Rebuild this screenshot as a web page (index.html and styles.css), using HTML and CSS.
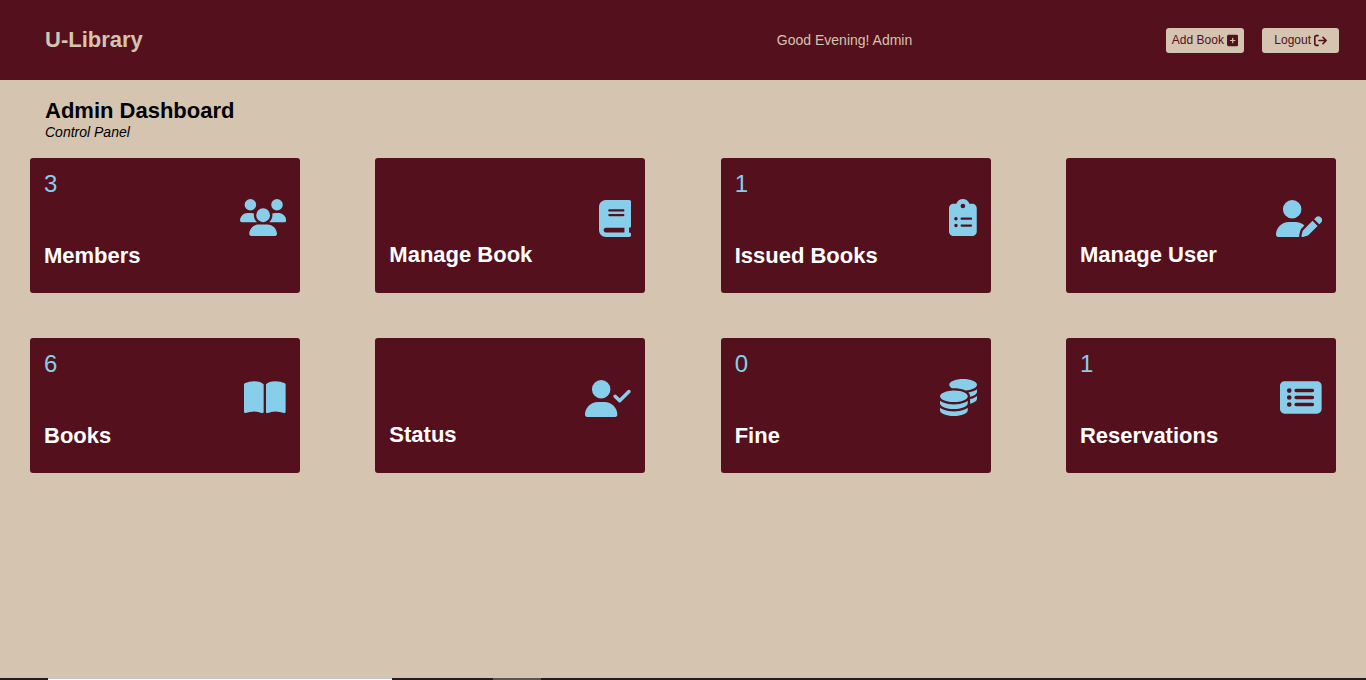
FILE: index.html
```html
<!DOCTYPE html>
<html lang="en">
<head>
<meta charset="utf-8">
<meta name="viewport" content="width=device-width, initial-scale=1">
<title>U-Library</title>
<link rel="stylesheet" href="styles.css">
</head>
<body>
<header class="topbar">
  <div class="brand">U-Library</div>
  <p class="greeting">Good Evening! Admin</p>
  <div class="actions">
    <button class="btn" type="button">Add Book <svg class="btn-icon" viewBox="0 0 448 512" aria-hidden="true"><path d="M64 32C28.7 32 0 60.7 0 96V416c0 35.3 28.7 64 64 64H384c35.3 0 64-28.7 64-64V96c0-35.3-28.7-64-64-64H64zM200 344V280H136c-13.3 0-24-10.7-24-24s10.7-24 24-24h64V168c0-13.3 10.7-24 24-24s24 10.7 24 24v64h64c13.3 0 24 10.7 24 24s-10.7 24-24 24H248v64c0 13.3-10.7 24-24 24s-24-10.7-24-24z"/></svg></button>
    <button class="btn btn-wide" type="button">Logout <svg class="btn-icon" viewBox="0 0 512 512" aria-hidden="true"><path d="M502.6 278.6c12.5-12.5 12.5-32.8 0-45.3l-128-128c-12.5-12.5-32.8-12.5-45.3 0s-12.5 32.8 0 45.3L402.7 224 192 224c-17.7 0-32 14.3-32 32s14.3 32 32 32l210.7 0-73.4 73.4c-12.5 12.5-12.5 32.8 0 45.3s32.8 12.5 45.3 0l128-128zM160 96c17.7 0 32-14.3 32-32s-14.3-32-32-32L96 32C43 32 0 75 0 128L0 384c0 53 43 96 96 96l64 0c17.7 0 32-14.3 32-32s-14.3-32-32-32l-64 0c-17.7 0-32-14.3-32-32l0-256c0-17.7 14.3-32 32-32l64 0z"/></svg></button>
  </div>
</header>
<main class="main">
  <div class="heading">
    <h1 class="title">Admin Dashboard</h1>
    <p class="subtitle">Control Panel</p>
  </div>
  <section class="cards">
    <article class="card">
      <p class="count">3</p>
      <svg class="icon" viewBox="0 0 640 512" aria-hidden="true"><path d="M144 0a80 80 0 1 1 0 160A80 80 0 1 1 144 0zM512 0a80 80 0 1 1 0 160A80 80 0 1 1 512 0zM0 298.7C0 239.8 47.8 192 106.7 192h42.7c15.9 0 31 3.5 44.6 9.7c-1.3 7.2-1.9 14.7-1.9 22.3c0 38.2 16.8 72.5 43.3 96c-.2 0-.4 0-.7 0H21.3C9.6 320 0 310.4 0 298.7zM405.3 320c-.2 0-.4 0-.7 0c26.6-23.5 43.3-57.8 43.3-96c0-7.6-.7-15-1.9-22.3c13.6-6.3 28.7-9.7 44.6-9.7h42.7C592.2 192 640 239.8 640 298.7c0 11.8-9.6 21.3-21.3 21.3H405.3zM224 224a96 96 0 1 1 192 0 96 96 0 1 1-192 0zM128 485.3C128 411.7 187.7 352 261.3 352H378.7C452.3 352 512 411.7 512 485.3c0 14.7-11.9 26.7-26.7 26.7H154.7c-14.7 0-26.7-11.9-26.7-26.7z"/></svg>
      <h2 class="label">Members</h2>
    </article>
    <article class="card card-plain">
      <svg class="icon" viewBox="0 0 448 512" aria-hidden="true"><path d="M96 0C43 0 0 43 0 96V416c0 53 43 96 96 96H384h32c17.7 0 32-14.3 32-32s-14.3-32-32-32V384c17.7 0 32-14.3 32-32V32c0-17.7-14.3-32-32-32H384 96zm0 384H352v64H96c-17.7 0-32-14.3-32-32s14.3-32 32-32zm32-240c0-8.8 7.2-16 16-16H336c8.8 0 16 7.2 16 16s-7.2 16-16 16H144c-8.8 0-16-7.2-16-16zm16 48H336c8.8 0 16 7.2 16 16s-7.2 16-16 16H144c-8.8 0-16-7.2-16-16s7.2-16 16-16z"/></svg>
      <h2 class="label">Manage Book</h2>
    </article>
    <article class="card">
      <p class="count">1</p>
      <svg class="icon" viewBox="0 0 384 512" aria-hidden="true"><path d="M192 0c-41.8 0-77.4 26.7-90.5 64H64C28.7 64 0 92.7 0 128V448c0 35.3 28.7 64 64 64H320c35.3 0 64-28.7 64-64V128c0-35.3-28.7-64-64-64H282.5C269.4 26.7 233.8 0 192 0zm0 64a32 32 0 1 1 0 64 32 32 0 1 1 0-64zM72 272a24 24 0 1 1 48 0 24 24 0 1 1-48 0zm104-16H304c8.8 0 16 7.2 16 16s-7.2 16-16 16H176c-8.8 0-16-7.2-16-16s7.2-16 16-16zM72 368a24 24 0 1 1 48 0 24 24 0 1 1-48 0zm88 0c0-8.8 7.2-16 16-16H304c8.8 0 16 7.2 16 16s-7.2 16-16 16H176c-8.8 0-16-7.2-16-16z"/></svg>
      <h2 class="label">Issued Books</h2>
    </article>
    <article class="card card-plain">
      <svg class="icon" viewBox="0 0 640 512" aria-hidden="true"><path d="M224 256A128 128 0 1 0 224 0a128 128 0 1 0 0 256zm-45.7 48C79.8 304 0 383.8 0 482.3C0 498.7 13.3 512 29.7 512H322.8c-3.1-8.8-3.7-18.4-1.4-27.8l15-60.1c2.8-11.3 8.6-21.5 16.8-29.7l40.3-40.3c-32.1-31-75.7-50.1-123.9-50.1H178.3zm435.5-68.3c-15.6-15.6-40.9-15.6-56.6 0l-29.4 29.4 71 71 29.4-29.4c15.6-15.6 15.6-40.9 0-56.6l-14.4-14.4zM375.9 417c-4.1 4.1-7 9.2-8.4 14.9l-15 60.1c-1.4 5.5 .2 11.2 4.2 15.2s9.7 5.6 15.2 4.2l60.1-15c5.6-1.4 10.8-4.3 14.9-8.4L576.1 358.7l-71-71L375.9 417z"/></svg>
      <h2 class="label">Manage User</h2>
    </article>
    <article class="card">
      <p class="count">6</p>
      <svg class="icon" viewBox="0 0 576 512" aria-hidden="true"><path d="M249.6 471.5c10.8 3.8 22.4-4.1 22.4-15.5V78.6c0-4.2-1.6-8.4-5-11C247.4 52 202.4 32 144 32C93.5 32 46.3 45.3 18.1 56.1C6.8 60.5 0 71.7 0 83.8V454.1c0 11.9 12.8 20.2 24.1 16.5C55.6 460.1 105.5 448 144 448c33.9 0 79 14 105.6 23.5zm76.8 0C353 462 398.1 448 432 448c38.5 0 88.4 12.1 119.9 22.6c11.3 3.8 24.1-4.6 24.1-16.5V83.8c0-12.1-6.8-23.3-18.1-27.6C529.7 45.3 482.5 32 432 32c-58.4 0-103.4 20-123 35.6c-3.3 2.6-5 6.8-5 11V456c0 11.4 11.7 19.3 22.4 15.5z"/></svg>
      <h2 class="label">Books</h2>
    </article>
    <article class="card card-plain">
      <svg class="icon" viewBox="0 0 640 512" aria-hidden="true"><path d="M96 128a128 128 0 1 1 256 0A128 128 0 1 1 96 128zM0 482.3C0 383.8 79.8 304 178.3 304h91.4C368.2 304 448 383.8 448 482.3c0 16.4-13.3 29.7-29.7 29.7H29.7C13.3 512 0 498.7 0 482.3zM625 177L497 305c-9.4 9.4-24.6 9.4-33.9 0l-64-64c-9.4-9.4-9.4-24.6 0-33.9s24.6-9.4 33.9 0l47 47L591 143c9.4-9.4 24.6-9.4 33.9 0s9.4 24.6 0 33.9z"/></svg>
      <h2 class="label">Status</h2>
    </article>
    <article class="card">
      <p class="count">0</p>
      <svg class="icon" viewBox="0 0 512 512" aria-hidden="true"><path d="M512 80c0 18-14.3 34.6-38.4 48c-29.1 16.1-72.5 27.5-122.3 30.9c-3.7-1.8-7.4-3.5-11.3-5C300.6 137.4 248.2 128 192 128c-8.3 0-16.4 .2-24.5 .6l-1.1-.6C142.3 114.6 128 98 128 80c0-44.2 86-80 192-80S512 35.8 512 80zM160.7 161.1c10.2-.7 20.7-1.1 31.3-1.1c62.2 0 117.4 12.3 152.5 31.4C369.3 204.9 384 221.7 384 240c0 4-.7 7.9-2.1 11.7c-4.6 13.2-17 25.3-35 35.5c-.1 .1-.3 .1-.4 .2c-.3 .2-.6 .3-.9 .5c-35 19.4-90.8 32-153.6 32c-59.6 0-112.9-11.3-148.2-29.1c-1.9-.9-3.7-1.9-5.5-2.9C14.3 274.6 0 258 0 240c0-34.8 53.4-64.5 128-75.4c10.5-1.5 21.4-2.7 32.7-3.5zM416 240c0-21.9-10.6-39.9-24.1-53.4c28.3-4.4 54.2-11.4 76.2-20.5c16.3-6.8 31.5-15.2 43.9-25.5V176c0 19.3-16.5 37.1-43.8 50.9c-14.6 7.4-32.4 13.7-52.4 18.5c.1-1.8 .2-3.5 .2-5.3zm-32 96c0 18-14.3 34.6-38.4 48c-1.8 1-3.6 1.9-5.5 2.9C304.9 404.7 251.6 416 192 416c-62.8 0-118.6-12.6-153.6-32C14.3 370.6 0 354 0 336V300.6c12.5 10.3 27.6 18.7 43.9 25.5C83.4 342.6 135.8 352 192 352s108.6-9.4 148.1-25.9c7.8-3.2 15.3-6.9 22.4-10.9c6.1-3.4 11.8-7.2 17.2-11.2c1.5-1.1 2.9-2.3 4.3-3.4V336zm32 0V278.1c19-4.2 36.5-9.5 52.1-16c16.3-6.8 31.5-15.2 43.9-25.5V272c0 10.5-5 21-14.9 30.9c-16.3 16.3-45 29.7-81.3 38.4c.1-1.7 .2-3.5 .2-5.3zM192 448c56.2 0 108.6-9.4 148.1-25.9c16.3-6.8 31.5-15.2 43.9-25.5V432c0 44.2-86 80-192 80S0 476.2 0 432V396.6c12.5 10.3 27.6 18.7 43.9 25.5C83.4 438.6 135.8 448 192 448z"/></svg>
      <h2 class="label">Fine</h2>
    </article>
    <article class="card">
      <p class="count">1</p>
      <svg class="icon" viewBox="0 0 576 512" aria-hidden="true"><path d="M0 96C0 60.7 28.7 32 64 32H512c35.3 0 64 28.7 64 64V416c0 35.3-28.7 64-64 64H64c-35.3 0-64-28.7-64-64V96zM128 288a32 32 0 1 0 0-64 32 32 0 1 0 0 64zm32-128a32 32 0 1 0-64 0 32 32 0 1 0 64 0zM128 384a32 32 0 1 0 0-64 32 32 0 1 0 0 64zm96-248c-13.3 0-24 10.7-24 24s10.7 24 24 24H448c13.3 0 24-10.7 24-24s-10.7-24-24-24H224zm0 96c-13.3 0-24 10.7-24 24s10.7 24 24 24H448c13.3 0 24-10.7 24-24s-10.7-24-24-24H224zm0 96c-13.3 0-24 10.7-24 24s10.7 24 24 24H448c13.3 0 24-10.7 24-24s-10.7-24-24-24H224z"/></svg>
      <h2 class="label">Reservations</h2>
    </article>
  </section>
</main>
<footer class="strip"><span class="strip-light"></span><span class="strip-mid"></span></footer>
</body>
</html>
```

FILE: styles.css
```css
* {
  box-sizing: border-box;
  margin: 0;
  padding: 0;
}

body {
  display: flex;
  flex-direction: column;
  min-height: 100vh;
  background: #d5c4af;
  color: #000;
  font-family: "Liberation Sans", Arial, sans-serif;
}

.topbar {
  display: grid;
  grid-template-columns: auto 5fr auto 2fr auto;
  align-items: center;
  min-height: 80px;
  padding: 0 27px 0 45px;
  background: #54101d;
  color: #d5c4af;
}

.brand {
  grid-column: 1;
  font-size: 22px;
  font-weight: bold;
}

.greeting {
  grid-column: 3;
  font-size: 14px;
}

.actions {
  grid-column: 5;
  display: flex;
  gap: 18px;
}

.btn {
  display: flex;
  align-items: center;
  gap: 3px;
  height: 25px;
  padding: 0 6px;
  border: 0;
  border-radius: 3px;
  background: #d5c4af;
  color: #54101d;
  font: 12px "Liberation Sans", Arial, sans-serif;
  cursor: pointer;
}

.btn-wide {
  padding: 0 12px;
}

.btn-icon {
  height: 13px;
  fill: currentColor;
}

.main {
  flex: 1;
  padding: 18px 30px;
}

.heading {
  padding: 0 15px;
}

.title {
  font-size: 22px;
  line-height: 26px;
}

.subtitle {
  font-size: 14px;
  line-height: 16px;
  font-style: italic;
}

.cards {
  display: grid;
  grid-template-columns: repeat(auto-fit, 270px);
  justify-content: space-between;
  gap: 45px 0;
  padding-top: 18px;
}

.card {
  display: flex;
  flex-direction: column;
  min-height: 135px;
  padding: 14px 14px 22px;
  border-radius: 3px;
  background: #54101d;
}

.card-plain {
  justify-content: flex-end;
  padding-bottom: 25px;
}

.count {
  margin-bottom: 3px;
  color: #87ceeb;
  font-size: 24px;
  line-height: 24px;
}

.icon {
  align-self: flex-end;
  height: 37px;
  fill: #87ceeb;
}

.label {
  margin-top: 7px;
  color: #fff;
  font-size: 22px;
  line-height: 26px;
}

.card-plain .label {
  margin-top: 5px;
}

.strip {
  display: flex;
  gap: 101px;
  height: 2px;
  padding-left: 48px;
  background: #231f20;
}

.strip-light {
  width: 344px;
  border-top: 1px solid #c4c4c4;
  background: #fff;
}

.strip-mid {
  width: 48px;
  background: #5c5655;
}
```
